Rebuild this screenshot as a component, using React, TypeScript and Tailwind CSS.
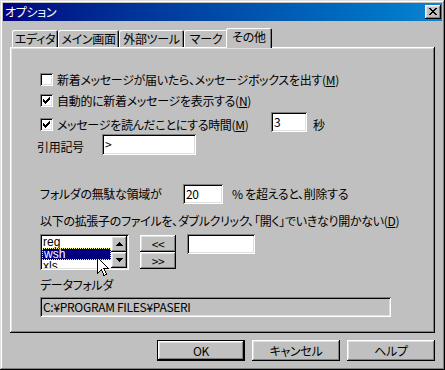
import React from "react";

const RAISED =
  "shadow-[inset_-1px_-1px_#000000,inset_1px_1px_#ffffff,inset_-2px_-2px_#808080,inset_2px_2px_#dfdfdf]";
const WINDOW =
  "shadow-[inset_-1px_-1px_#000000,inset_1px_1px_#dfdfdf,inset_-2px_-2px_#808080,inset_2px_2px_#ffffff]";
const SUNKEN =
  "shadow-[inset_1px_1px_#808080,inset_-1px_-1px_#ffffff,inset_2px_2px_#000000,inset_-2px_-2px_#dfdfdf]";
const DEFAULT_BTN =
  "shadow-[inset_0_0_0_1px_#000000,inset_-2px_-2px_#000000,inset_2px_2px_#ffffff,inset_-3px_-3px_#808080,inset_3px_3px_#dfdfdf]";
const TAB =
  "shadow-[inset_1px_1px_#ffffff,inset_-1px_0_#000000,inset_-2px_0_#808080]";

function Check({ checked }: { checked: boolean }) {
  return (
    <div className={`relative w-[13px] h-[13px] shrink-0 bg-white ${SUNKEN}`}>
      {checked && (
        <svg
          className="absolute left-[3px] top-[3px]"
          width="7"
          height="7"
          viewBox="0 0 7 7"
          shapeRendering="crispEdges"
        >
          <path
            d="M0 2h1v3h-1z M1 3h1v3h-1z M2 4h1v3h-1z M3 3h1v3h-1z M4 2h1v3h-1z M5 1h1v3h-1z M6 0h1v3h-1z"
            fill="#000"
          />
        </svg>
      )}
    </div>
  );
}

function Arrow({ up }: { up: boolean }) {
  return (
    <svg width="7" height="4" viewBox="0 0 7 4" shapeRendering="crispEdges">
      <path
        d={
          up
            ? "M3 0h1v1h-1z M2 1h3v1h-3z M1 2h5v1h-5z M0 3h7v1h-7z"
            : "M0 0h7v1h-7z M1 1h5v1h-5z M2 2h3v1h-3z M3 3h1v1h-1z"
        }
        fill="#000"
      />
    </svg>
  );
}

function Tab({ label, w, active }: { label: string; w: string; active?: boolean }) {
  if (active) {
    return (
      <div
        className={`relative z-10 -mx-[2px] -mb-[1px] h-[20px] ${w} rounded-t-[2px] bg-[#c0c0c0] ${TAB} flex items-center justify-center pb-[2px]`}
      >
        {label}
      </div>
    );
  }
  return (
    <div
      className={`h-[17px] ${w} rounded-t-[2px] bg-[#c0c0c0] ${TAB} flex items-center justify-center pt-[1px]`}
    >
      {label}
    </div>
  );
}

function Btn({ children, def }: { children: React.ReactNode; def?: boolean }) {
  return (
    <div
      className={`w-[88px] h-[21px] flex items-center justify-center ${def ? DEFAULT_BTN : RAISED}`}
    >
      {children}
    </div>
  );
}

export default function App() {
  return (
    <div
      className={`relative w-[445px] h-[370px] bg-[#c0c0c0] p-[3px] flex flex-col text-[12px] leading-[14px] tracking-[-0.3px] text-black font-['Noto_Sans_CJK_JP','Noto_Sans',sans-serif] [font-feature-settings:'palt'] ${WINDOW}`}
    >
      {/* title bar */}
      <div className="h-[18px] bg-linear-to-r from-[#000080] to-[#1084d0] flex items-center justify-between pl-[2px] pr-[1px]">
        <span className="text-white">オプション</span>
        <div className={`w-[16px] h-[14px] bg-[#c0c0c0] ${RAISED} flex items-start pl-[4px] pt-[3px]`}>
          <svg width="8" height="7" viewBox="0 0 8 7" shapeRendering="crispEdges">
            <path
              d="M0 0h2v1h-2z M6 0h2v1h-2z M1 1h2v1h-2z M5 1h2v1h-2z M2 2h4v1h-4z M3 3h2v1h-2z M2 4h4v1h-4z M1 5h2v1h-2z M5 5h2v1h-2z M0 6h2v1h-2z M6 6h2v1h-2z"
              fill="#000"
            />
          </svg>
        </div>
      </div>

      {/* tabs */}
      <div className="mt-[7px] h-[19px] pl-[9px] flex items-end">
        <Tab label="エディタ" w="w-[46px]" />
        <Tab label="メイン画面" w="w-[61px]" />
        <Tab label="外部ツール" w="w-[65px]" />
        <Tab label="マーク" w="w-[44px]" />
        <Tab label="その他" w="w-[46px]" active />
      </div>

      {/* panel */}
      <div className={`mx-[7px] h-[286px] ${RAISED} flex flex-col pl-[30px]`}>
        {/* row 1 */}
        <div className="mt-[26px] h-[13px] flex items-center">
          <Check checked={false} />
          <span className="ml-[4px]">
            新着メッセージが届いたら、メッセージボックスを出す(<span className="underline">M</span>)
          </span>
        </div>
        {/* row 2 */}
        <div className="mt-[8px] h-[13px] flex items-center">
          <Check checked />
          <span className="ml-[4px]">
            自動的に新着メッセージを表示する(<span className="underline">N</span>)
          </span>
        </div>
        {/* row 3 */}
        <div className="mt-[5px] h-[20px] flex items-start">
          <div className="w-[231px] mt-[6px] h-[13px] flex items-center">
            <Check checked />
            <span className="ml-[4px]">
              メッセージを読んだことにする時間(<span className="underline">M</span>)
            </span>
          </div>
          <div className={`w-[36px] h-[20px] bg-white ${SUNKEN} pl-[3px] pt-[3px]`}>3</div>
          <span className="ml-[6px] mt-[6px]">秒</span>
        </div>
        {/* row 4 */}
        <div className="mt-[2px] -ml-[3px] h-[21px] flex items-center">
          <span className="w-[65px] pt-[4px]">引用記号</span>
          <div className={`w-[94px] h-[21px] bg-white ${SUNKEN} pl-[3px] pt-[3px]`}>&gt;</div>
        </div>
        {/* row 5 */}
        <div className="mt-[29px] h-[20px] flex items-center">
          <span className="w-[143px]">フォルダの無駄な領域が</span>
          <div className={`w-[40px] h-[20px] bg-white ${SUNKEN} pl-[3px] pt-[3px]`}>20</div>
          <span className="ml-[9px]">% を超えると、削除する</span>
        </div>
        {/* row 6 */}
        <div className="mt-[10px] h-[14px] flex items-center">
          <span>
            以下の拡張子のファイルを、ダブルクリック、「開く」でいきなり開かない(<span className="underline">D</span>)
          </span>
        </div>
        {/* row 7 */}
        <div className="mt-[6px] h-[36px] flex items-start">
          <div className={`w-[89px] h-[36px] bg-white ${SUNKEN} p-[2px] flex`}>
            <div className="w-[69px] h-[32px] overflow-hidden flex flex-col text-[12px] leading-[12px] tracking-normal font-['Liberation_Sans',sans-serif]">
              <div className="h-[12px] shrink-0 pl-[1px]">reg</div>
              <div className="h-[12px] shrink-0 pl-[1px] leading-[10px] bg-[#000080] text-white border border-dotted border-[#ffff80]">
                wsh
              </div>
              <div className="h-[12px] shrink-0 pl-[1px]">xls</div>
            </div>
            <div className="w-[16px] h-[32px] flex flex-col">
              <div className={`w-[16px] h-[16px] bg-[#c0c0c0] ${RAISED} flex items-center justify-center`}>
                <Arrow up />
              </div>
              <div className={`w-[16px] h-[16px] bg-[#c0c0c0] ${RAISED} flex items-center justify-center`}>
                <Arrow up={false} />
              </div>
            </div>
          </div>
          <div className="ml-[11px] mt-[1px] flex flex-col">
            <div className={`w-[36px] h-[17px] ${RAISED} flex items-center justify-center`}>&lt;&lt;</div>
            <div className={`w-[36px] h-[17px] ${RAISED} flex items-center justify-center`}>&gt;&gt;</div>
          </div>
          <div className={`ml-[11px] w-[68px] h-[20px] bg-white ${SUNKEN}`} />
        </div>
        {/* row 8 */}
        <div className="mt-[8px] h-[14px] flex items-center">
          <span>データフォルダ</span>
        </div>
        {/* row 9 */}
        <div className={`mt-[5px] w-[351px] h-[20px] ${SUNKEN} pl-[3px] pt-[3px]`}>
          C:¥PROGRAM FILES¥PASERI
        </div>
      </div>

      {/* buttons */}
      <div className="mt-[7px] flex justify-end gap-[7px] pr-[7px]">
        <Btn def>OK</Btn>
        <Btn>キャンセル</Btn>
        <Btn>ヘルプ</Btn>
      </div>

      {/* mouse cursor */}
      <svg
        className="absolute left-[97px] top-[257px]"
        width="13"
        height="20"
        viewBox="0 0 13 20"
        shapeRendering="crispEdges"
      >
        <path
          d="M0.5 0.5 L0.5 16.5 L4.5 12.5 L7 18.5 L9.5 17.5 L7 11.5 L11.5 11.5 Z"
          fill="#fff"
          stroke="#000"
          strokeWidth="1"
          strokeLinejoin="miter"
        />
      </svg>
    </div>
  );
}
